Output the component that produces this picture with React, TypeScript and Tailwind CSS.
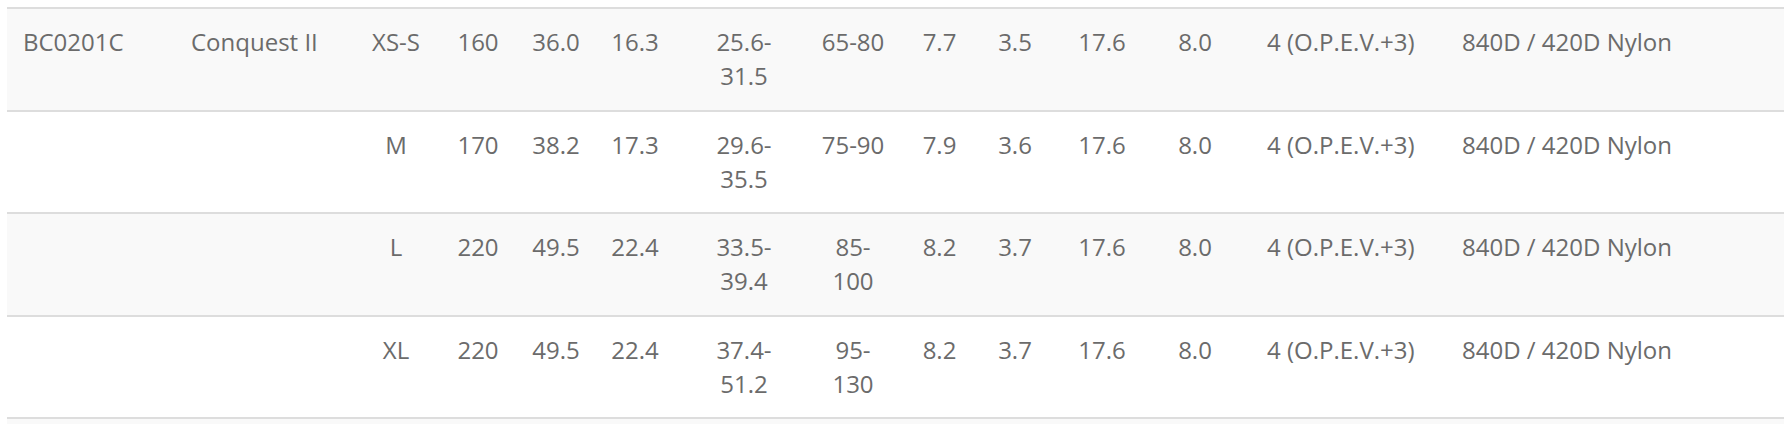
import React from 'react';

type Cell = string | string[];

const rows: Cell[][] = [
  ['BC0201C', 'Conquest II', 'XS-S', '160', '36.0', '16.3', ['25.6-', '31.5'], '65-80', '7.7', '3.5', '17.6', '8.0', '4 (O.P.E.V.+3)', '840D / 420D Nylon'],
  ['', '', 'M', '170', '38.2', '17.3', ['29.6-', '35.5'], '75-90', '7.9', '3.6', '17.6', '8.0', '4 (O.P.E.V.+3)', '840D / 420D Nylon'],
  ['', '', 'L', '220', '49.5', '22.4', ['33.5-', '39.4'], ['85-', '100'], '8.2', '3.7', '17.6', '8.0', '4 (O.P.E.V.+3)', '840D / 420D Nylon'],
  ['', '', 'XL', '220', '49.5', '22.4', ['37.4-', '51.2'], ['95-', '130'], '8.2', '3.7', '17.6', '8.0', '4 (O.P.E.V.+3)', '840D / 420D Nylon'],
];

// column widths, tuned so the centred columns sit where the reference has them
const cols = [
  'w-[168px]', 'w-[179px]', 'w-[84px]', 'w-[80px]', 'w-[76px]', 'w-[82px]', 'w-[136px]',
  'w-[82px]', 'w-[82px]', 'w-[78px]', 'w-[96px]', 'w-[90px]', 'w-[206px]', 'w-auto',
];

const cellClass = (i: number) => {
  if (i === 0 || i === 1) return 'pl-4 pr-2 text-left';
  if (i === 8) return 'pl-[9px] pr-0 text-center';
  if (i === 12) return 'pl-[27px] pr-2 text-left';
  if (i === 13) return 'pl-4 pr-2 text-left';
  return 'px-0 text-center';
};

const App: React.FC = () => {
  return (
    <div className="h-[424px] overflow-hidden bg-white pl-[7px] pt-[7px] font-['Open_Sans',sans-serif] text-[24px] leading-[1.42857] text-[#6b6b6b]">
      <table className="w-full table-fixed">
        <colgroup>
          {cols.map((c, i) => (
            <col key={i} className={c} />
          ))}
        </colgroup>
        <tbody>
          {rows.map((row, r) => (
            <tr key={r} className={r % 2 === 0 ? 'bg-[#f9f9f9]' : 'bg-white'}>
              {row.map((cell, i) => (
                <td key={i} className={`border-t-2 border-[#dddddd] py-4 align-top whitespace-nowrap ${cellClass(i)}`}>
                  {Array.isArray(cell) ? (
                    <>
                      {cell[0]}
                      <br />
                      {cell[1]}
                    </>
                  ) : (
                    cell
                  )}
                </td>
              ))}
            </tr>
          ))}
          <tr className="bg-[#f9f9f9]">
            <td colSpan={14} className="h-[40px] border-t-2 border-[#dddddd]"></td>
          </tr>
        </tbody>
      </table>
    </div>
  );
};

export default App;
